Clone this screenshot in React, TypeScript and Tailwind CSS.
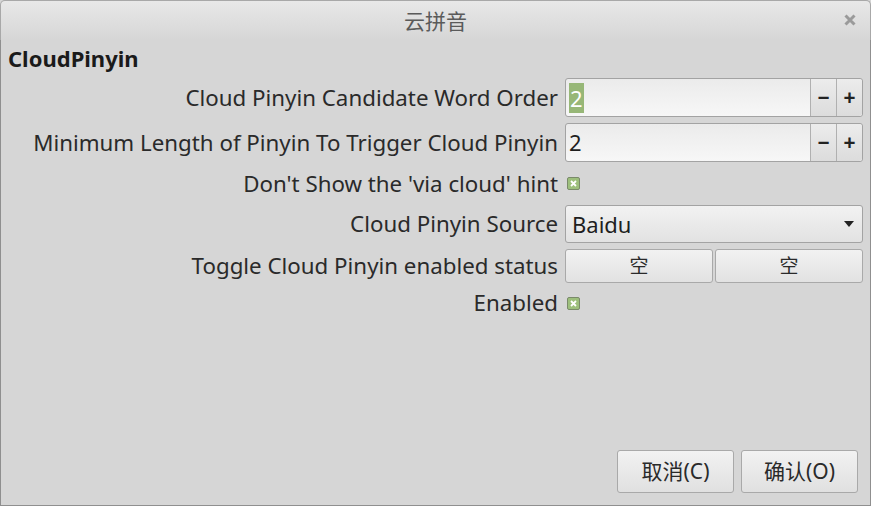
import { FC } from "react";

const font = { fontFamily: '"Noto Sans", "Open Sans", "Noto Sans CJK SC", sans-serif' };

const CheckMark: FC = () => (
  <span className="flex h-[13px] w-[13px] items-center justify-center rounded-[2px] border border-[#7a8a6a] bg-[#9dbf7c]">
    <svg width="7" height="7" viewBox="0 0 7 7">
      <path d="M1 1 L6 6 M6 1 L1 6" stroke="#fff" strokeWidth="1.8" />
    </svg>
  </span>
);

const SpinBox: FC<{ value: string; selected?: boolean }> = ({ value, selected }) => (
  <div className="flex h-[39px] w-[298px] rounded-[3px] border border-[#a3a3a3] bg-gradient-to-b from-[#ebebeb] to-[#f7f7f7]">
    <div className="flex flex-1 items-center pl-[3px] text-[22px] text-[#1e1e1e]">
      {selected ? (
        <span className="bg-[#97b777] px-[1px] leading-[30px] text-white">{value}</span>
      ) : (
        <span>{value}</span>
      )}
    </div>
    <div className="flex w-[26px] items-center justify-center border-l border-[#b0b0b0] bg-gradient-to-b from-[#ececec] to-[#dcdcdc] text-[21px] font-bold text-[#222]">
      −
    </div>
    <div className="flex w-[26px] items-center justify-center rounded-r-[3px] border-l border-[#b0b0b0] bg-gradient-to-b from-[#ececec] to-[#dcdcdc] text-[21px] font-bold text-[#222]">
      +
    </div>
  </div>
);

const Row: FC<{ label: string; h: string; children: React.ReactNode }> = ({ label, h, children }) => (
  <div className={`flex items-center ${h}`}>
    <div className="w-[557px] whitespace-nowrap text-right text-[22.3px] text-[#2a2a2a]">{label}</div>
    <div className="ml-[7px] flex items-center">{children}</div>
  </div>
);

const App: FC = () => {
  return (
    <div className="flex h-[506px] w-[871px] flex-col overflow-hidden bg-[#d6d6d6]" style={font}>
      <div className="relative flex h-[40px] shrink-0 items-center justify-center rounded-t-[5px] border-x border-t border-[#a8a8a8] bg-gradient-to-b from-[#e8e8e8] to-[#d6d6d6]">
        <span className="text-[21px] text-[#5a5a5a]" style={{ fontFamily: '"Noto Sans CJK SC", serif' }}>
          云拼音
        </span>
        <svg className="absolute right-[14px] top-[13px]" width="12" height="12" viewBox="0 0 12 12">
          <path d="M1.5 1.5 L10.5 10.5 M10.5 1.5 L1.5 10.5" stroke="#9a9a9a" strokeWidth="3" />
        </svg>
      </div>
      <div className="flex flex-1 flex-col border-x border-b border-[#8f8f8f]">
        <div className="h-[38px] pl-[7px] pt-[2px] text-[22px] font-bold leading-[32px] text-[#1a1a1a]">CloudPinyin</div>
        <div className="flex flex-col gap-[6px]">
          <Row label="Cloud Pinyin Candidate Word Order" h="h-[39px]">
            <SpinBox value="2" selected />
          </Row>
          <Row label="Minimum Length of Pinyin To Trigger Cloud Pinyin" h="h-[39px]">
            <SpinBox value="2" />
          </Row>
          <Row label="Don't Show the 'via cloud' hint" h="h-[31px]">
            <div className="pl-[2px]">
              <CheckMark />
            </div>
          </Row>
          <Row label="Cloud Pinyin Source" h="h-[38px]">
            <div className="flex h-[38px] w-[298px] items-center justify-between rounded-[3px] border border-[#a3a3a3] bg-gradient-to-b from-[#f2f2f2] to-[#e2e2e2] pl-[6px] pr-[8px] text-[22px] text-[#1e1e1e]">
              <span>Baidu</span>
              <svg width="10" height="6" viewBox="0 0 10 6">
                <path d="M0 0 H10 L5 6 Z" fill="#222" />
              </svg>
            </div>
          </Row>
          <Row label="Toggle Cloud Pinyin enabled status" h="h-[34px]">
            <div className="flex w-[298px] gap-[2px]">
              {[0, 1].map((i) => (
                <div
                  key={i}
                  className="flex h-[34px] flex-1 items-center justify-center rounded-[3px] border border-[#a9a9a9] bg-gradient-to-b from-[#f2f2f2] to-[#e2e2e2] text-[19px] text-[#2a2a2a]"
                >
                  空
                </div>
              ))}
            </div>
          </Row>
          <Row label="Enabled" h="h-[28px]">
            <div className="pl-[2px]">
              <CheckMark />
            </div>
          </Row>
        </div>
        <div className="mt-auto flex justify-end gap-[7px] pb-[12px] pr-[12px]">
          {["取消(C)", "确认(O)"].map((t) => (
            <div
              key={t}
              className="flex h-[43px] w-[117px] items-center justify-center rounded-[3px] border border-[#a9a9a9] bg-gradient-to-b from-[#f2f2f2] to-[#e0e0e0] text-[21px] text-[#2a2a2a]"
            >
              {t}
            </div>
          ))}
        </div>
      </div>
    </div>
  );
};

export default App;
